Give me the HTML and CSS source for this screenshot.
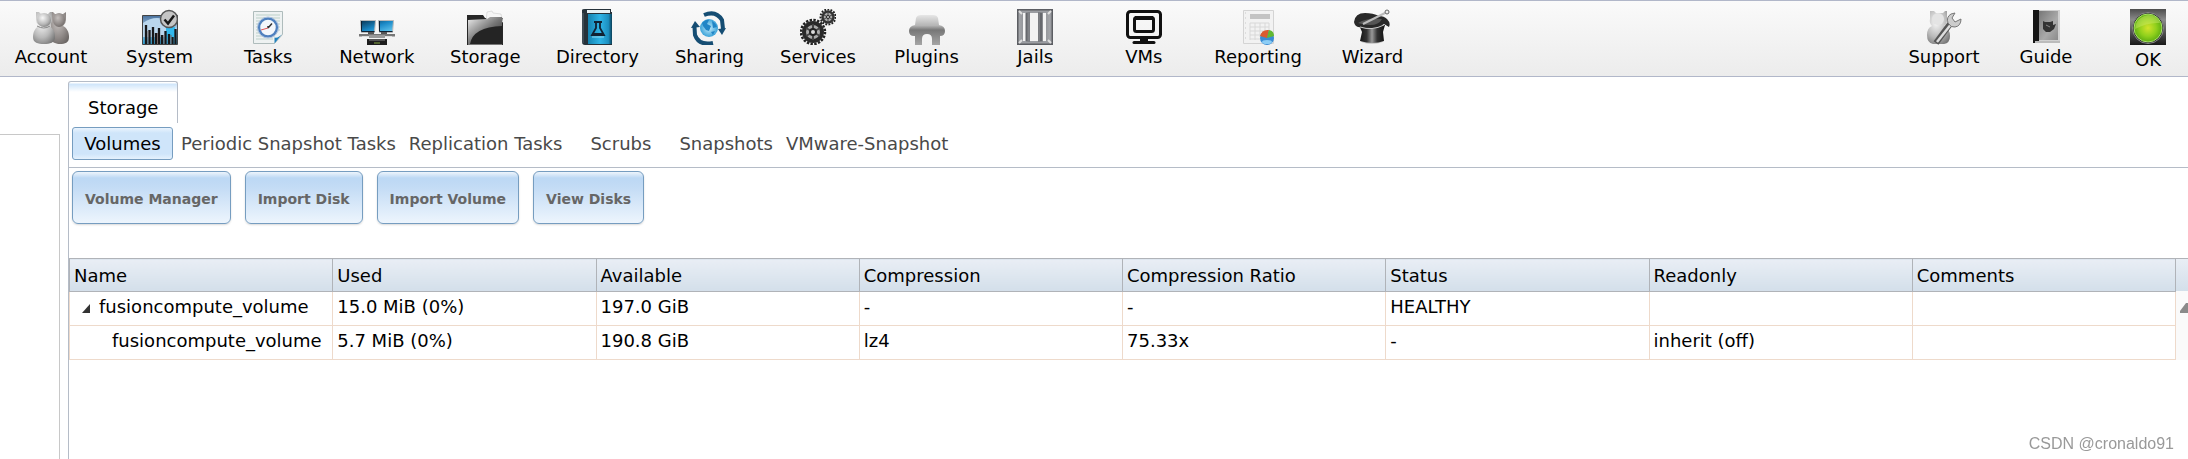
FILE: index.html
```html
<!DOCTYPE html>
<html lang="en">
<head>
<meta charset="utf-8">
<title>Storage</title>
<link rel="stylesheet" href="styles.css">
</head>
<body>
<svg class="defs" width="0" height="0" aria-hidden="true">
  <defs>
    <radialGradient id="silver" cx=".4" cy=".35" r=".75"><stop offset="0" stop-color="#f8f8f8"/><stop offset=".6" stop-color="#b9b9b9"/><stop offset="1" stop-color="#777"/></radialGradient>
    <radialGradient id="pewter" cx=".4" cy=".35" r=".75"><stop offset="0" stop-color="#c4bfbd"/><stop offset=".6" stop-color="#918b89"/><stop offset="1" stop-color="#6a6563"/></radialGradient>
    <linearGradient id="sky" x2="0" y2="1"><stop offset="0" stop-color="#476f9c"/><stop offset=".45" stop-color="#a8cbe8"/><stop offset="1" stop-color="#2c9ed0"/></linearGradient>
    <linearGradient id="screen" x2="1" y2="1"><stop offset="0" stop-color="#0a3350"/><stop offset=".5" stop-color="#1b8ac8"/><stop offset="1" stop-color="#6fd0f5"/></linearGradient>
    <linearGradient id="folder" x2="1" y2="1"><stop offset="0" stop-color="#eee"/><stop offset=".5" stop-color="#777"/><stop offset="1" stop-color="#222"/></linearGradient>
    <linearGradient id="book"><stop offset="0" stop-color="#1583b0"/><stop offset=".5" stop-color="#2fb4e6"/><stop offset=".85" stop-color="#1c8fc0"/><stop offset="1" stop-color="#0b3f57"/></linearGradient>
    <radialGradient id="globe"><stop offset="0" stop-color="#c5ecfb"/><stop offset="1" stop-color="#3aa2d8"/></radialGradient>
    <linearGradient id="puzzle" x2="0" y2="1"><stop offset="0" stop-color="#e6e6e6"/><stop offset=".35" stop-color="#b5b5b5"/><stop offset=".5" stop-color="#777"/><stop offset="1" stop-color="#a5a5a5"/></linearGradient>
    <linearGradient id="bar"><stop offset="0" stop-color="#a4a6aa"/><stop offset=".5" stop-color="#6c6e73"/><stop offset="1" stop-color="#a4a6aa"/></linearGradient>
    <linearGradient id="hat"><stop offset="0" stop-color="#111"/><stop offset=".3" stop-color="#333"/><stop offset=".5" stop-color="#999"/><stop offset=".7" stop-color="#333"/><stop offset="1" stop-color="#111"/></linearGradient>
    <linearGradient id="cover" x2="1" y2="1"><stop offset="0" stop-color="#777"/><stop offset=".6" stop-color="#aaa"/><stop offset="1" stop-color="#8a8a8a"/></linearGradient>
    <radialGradient id="lamp"><stop offset="0" stop-color="#d2e32c"/><stop offset=".6" stop-color="#8fd01c"/><stop offset="1" stop-color="#5fae12"/></radialGradient>
    <linearGradient id="plate" x2="0" y2="1"><stop offset="0" stop-color="#4d4d4d"/><stop offset=".3" stop-color="#8b8b8b"/><stop offset="1" stop-color="#181818"/></linearGradient>
  </defs>
</svg>

<header class="toolbar">
  <nav class="menu" aria-label="Main">
    <button class="item"><svg class="icon" viewBox="0 0 36 36">
      <path d="M17 3h3l2 2h8l3-2v8a8 8 0 0 1-3 6c4 2 6 6 6 11 0 6-4 7-9 7s-9-2-9-7z" fill="url(#pewter)"/>
      <path d="M3 3h3l2 2h7l2-2h2v9a8 8 0 0 1-3 5c4 2 6 6 6 11 0 6-5 7-11 7S0 34 0 28c0-5 2-9 6-11a8 8 0 0 1-3-6z" fill="url(#silver)"/>
      <ellipse cx="11" cy="11" rx="7" ry="7" fill="url(#silver)"/><path d="M4 17q7 4 13 0" stroke="#888" fill="none"/><ellipse cx="26" cy="11" rx="6" ry="7" fill="url(#pewter)"/>
    </svg>Account</button>
    <button class="item"><svg class="icon" viewBox="0 0 36 36">
      <path d="M.5 6.500h35v29H.5z" fill="url(#sky)" stroke="#444"/>
      <path d="M1 14q10-7 20-4l9 8v10H1z" fill="#b9d6ed"/><path d="M24 18h9v12h-9z" fill="#32b9ed"/>
      <path d="M4 35V16M7.500 35V21M11 35V18M14 35V24M17 35V19M20 35V26M23.500 35V22M27 35V25M30.500 35V28M33.500 35V20" stroke="#17181a" stroke-width="2.300"/><path d="M6 35V22M15.500 35V24M22 35V26M29 35V26" stroke="#766"/>
      <circle cx="27" cy="10" r="8.500" fill="#c5c5c5" stroke="#555" stroke-width="1.500"/><path d="M22.500 10.500l3.500 4 6-8" fill="none" stroke="#181818" stroke-width="2.500"/>
    </svg>System</button>
    <button class="item"><svg class="icon" viewBox="0 0 36 36">
      <path d="M3.500 2.500h29v23l-8 9h-21z" fill="#eef2f2" stroke="#afbcbc"/>
      <path d="M6 6h24M6 9h24M6 12h24M6 15h24M6 18h24M6 21h24M6 24h21M6 27h19M6 30h17" stroke="#bcd0c9"/>
      <path d="M24.500 34.500v-6q4 1 8-4z" fill="#2181bc"/>
      <circle cx="18" cy="18.500" r="9" fill="#f3f7fb" stroke="#4e80be" stroke-width="2.500"/><circle cx="18" cy="18.500" r="10.500" fill="none" stroke="#a8bfdd"/>
      <path d="M18 19l4-4.500M18 19v-2" stroke="#333" stroke-width="1.500"/><path d="M11 21l7-2" stroke="#d55"/>
    </svg>Tasks</button>
    <button class="item"><svg class="icon" viewBox="0 0 36 36">
      <path d="M1.500 11.500h15l-1 12h-13zM19.500 11.500h15l-1 12h-13z" fill="url(#screen)" stroke="#bbb"/>
      <path d="M2.500 12v10.500h13M20.500 12v10.500h13" fill="none" stroke="#123" />
      <path d="M9 23h6v2H9zM22 23h6v2h-6z" fill="#555"/><path d="M0 25h36v2.500H0z" fill="#777"/><path d="M3 27.500h9M24 27.500h9" stroke="#ddd"/>
      <path d="M10 26h16v3H10z" fill="#999"/><path d="M8 30h20v6H8z" fill="#1d1d1d"/><path d="M10 31h16" stroke="#888"/><path d="M15 34h6" stroke="#8a4"/>
    </svg>Network</button>
    <button class="item"><svg class="icon" viewBox="0 0 36 36">
      <path d="M0 6h16l2 3h18v27H0z" fill="#272727"/><path d="M20 3l5-1 1 2 8 1 2 8H19z" fill="#f5f5f5" stroke="#ccc" stroke-width=".6"/>
      <path d="M1 11l19-1 3-2h12v27H1z" fill="url(#folder)"/><path d="M3 35Q6 18 35 17v18z" fill="#242424"/><path d="M1 35.500h34" stroke="#777"/>
    </svg>Storage</button>
    <button class="item"><svg class="icon" viewBox="0 0 36 36">
      <path d="M3 1q0-1 3-1h26v3h1v33H6q-3 0-3-3z" fill="#26323a"/><path d="M8 1h23v3H8z" fill="#e7f1f4"/><path d="M9 5h24v30H9z" fill="url(#book)"/><path d="M4 4v30" stroke="#56656e"/>
      <path d="M15 13h8M17 13v6l-4 7h12l-4-7v-6" fill="none" stroke="#123" stroke-width="1.800"/><path d="M14 24h10v2H14z" fill="#123"/><path d="M13 28h12" stroke="#8cdaf5"/>
    </svg>Directory</button>
    <button class="item"><svg class="icon" viewBox="0 0 36 36">
      <circle cx="18" cy="19" r="9" fill="url(#globe)"/><path d="M11 14q4-4 7-3l-2 4 4 2-2 5-3-1-3-4zM21 12q4 2 5 6l-4 1zM20 23l4-1-2 4z" fill="#2185c6"/>
      <path d="M13 6Q25 1 31 11l1 9" fill="none" stroke="#154d73" stroke-width="4"/><path d="M27 20l8-1-4 7z" fill="#154d73"/>
      <path d="M22 34Q8 37 4 26l-.5-8" fill="none" stroke="#154d73" stroke-width="4"/><path d="M0 19l9-1-5-6z" fill="#154d73"/>
    </svg>Sharing</button>
    <button class="item"><svg class="icon" viewBox="0 0 36 36">
      <circle cx="13" cy="23" r="12" fill="none" stroke="#222" stroke-width="2.500" stroke-dasharray="2.400 1.370"/><circle cx="13" cy="23" r="9" fill="#aaa" stroke="#292929" stroke-width="4"/>
      <path d="M13 15v16M6 19l14 8M6 27l14-8" stroke="#444" stroke-width="2"/><circle cx="13" cy="23" r="3" fill="#ddd" stroke="#222" stroke-width="2"/>
      <circle cx="28" cy="8" r="7.500" fill="none" stroke="#222" stroke-width="2" stroke-dasharray="1.800 1.340"/><circle cx="28" cy="8" r="5.500" fill="#aaa" stroke="#333" stroke-width="2.500"/>
      <path d="M28 3v10M24 6l8 4M24 10l8-4" stroke="#444"/><circle cx="28" cy="8" r="1.500" fill="#ddd" stroke="#222"/>
    </svg>Services</button>
    <button class="item"><svg class="icon" viewBox="0 0 36 36">
      <path d="M7 9q1-3 5-3h12q4 0 5 3l1 7q6 1 6 6t-5 5v9h-8v-6q0-5-5-5t-5 5v6H6v-9H5q-5 0-5-5t6-6z" fill="url(#puzzle)"/>
    </svg>Plugins</button>
    <button class="item"><svg class="icon" viewBox="0 0 36 36">
      <path d="M0 0h36v36H0z" fill="#5c5e63"/><path d="M1.500 1.500h33v33h-33z" fill="#9b9da2"/><path d="M4 4h28v28H4z" fill="#f3f3f3"/>
      <path d="M2 3h4v30H2zM9 3h4v30H9zM21 3h5v30h-5zM29 3h4v30h-4z" fill="url(#bar)"/><path d="M9.500 4v28M24 4v28" stroke="#66686d" stroke-width="2"/>
      <path d="M2 2l3 3M34 2l-3 3M2 34l3-3M34 34l-3-3" stroke="#ddd" stroke-width="2"/>
    </svg>Jails</button>
    <button class="item"><svg class="icon" viewBox="0 0 36 36" fill="none" stroke="#111">
      <rect x="1.500" y="2.500" width="33" height="26" rx="3" stroke-width="3"/><rect x="8.500" y="8.500" width="19" height="14" rx="2" stroke-width="3"/><path d="M9 9h18" stroke-width="4"/>
      <path d="M14 30h8" stroke-width="4"/><path d="M8 33.500h20" stroke-width="3" stroke-linecap="round"/>
    </svg>VMs</button>
    <button class="item"><svg class="icon" viewBox="0 0 36 36">
      <path d="M3.500 1.500h30v33h-30z" fill="#f2f2f2" stroke="#d4d4d4"/><path d="M10 5h20v5H10z" fill="#c3c3c3"/>
      <path d="M10 14h19M10 18h19M10 22h16M10 26h12M10 30h10M10 14v17M15 14v17M20 14v14M25 14v9M29 14v9" stroke="#d8d8d8"/><path d="M5.500 3v30" stroke="#ddd" stroke-dasharray="2 3"/>
      <circle cx="27" cy="29" r="7" fill="#398bd3"/><path d="M27 29l-7-2q2-7 9-6z" fill="#d95b30"/><path d="M27 29l2-8q5 1 5 6z" fill="#62b832"/><ellipse cx="27" cy="33" rx="5" ry="2" fill="#8ccdf5"/>
    </svg>Reporting</button>
    <button class="item"><svg class="icon" viewBox="0 0 36 36">
      <ellipse cx="18" cy="32" rx="11" ry="3" fill="#ccc"/><path d="M5 16h26l-2 7 1 9q-11 4-24 0l2-9z" fill="url(#hat)"/>
      <path d="M0 13Q1 4 11 4q8 0 14 3 5 0 8 3 4 4 2 8l-5-3Q18 23 7 18 1 19 0 13z" fill="#292929"/><path d="M4 14q10-6 24-4-3 6-12 6-7 0-12-2z" fill="#555"/>
      <path d="M6 18q12 4 24-2" stroke="#ccc" fill="none"/><path d="M9 15L31 4" stroke="#bbb" stroke-width="2"/><circle cx="33" cy="3" r="2" fill="#eee" stroke="#666"/>
    </svg>Wizard</button>
  </nav>
  <nav class="menu menu-side" aria-label="Help and status">
    <button class="item"><svg class="icon" viewBox="0 0 36 36">
      <path d="M4 2h4l2 2h7l2-2h2v9q0 4-3 6 6 3 6 10 0 7-6 8H7q-6-1-6-9 0-7 5-9-3-3-2-7z" fill="url(#silver)"/><ellipse cx="12" cy="10" rx="6" ry="6" fill="#e4e4e4"/>
      <path d="M10 34l14-19" stroke="#555" stroke-width="6"/><path d="M11 33l15-19" stroke="#ddd" stroke-width="2.500"/>
      <path d="M22 14q-2-6 3-9l4-1-3 5 3 4 6-3q0 7-6 8-4 1-7-4z" fill="#ccc" stroke="#777"/>
    </svg>Support</button>
    <button class="item"><svg class="icon" viewBox="0 0 36 36">
      <path d="M5 1h27v33H5z" fill="#d0d0d0"/><path d="M5 1h6v33H5z" fill="#151515"/><path d="M11 2h19v29H11z" fill="url(#cover)"/><path d="M7 32h25v2H7z" fill="#bbb"/>
      <path d="M15 12l2 1h5l3-1v4l3-1-2 5-4 3h-4l-3-3z" fill="#333"/><path d="M18 16l4 2" stroke="#888"/>
    </svg>Guide</button>
    <button class="item status"><svg class="icon" viewBox="0 0 36 36">
      <path d="M0 0h36v36H0z" fill="url(#plate)"/><circle cx="18" cy="19" r="15.500" fill="#222" stroke="#888"/><circle cx="18" cy="19" r="14" fill="url(#lamp)" stroke="#a9e26a"/><path d="M5 20Q6 8 18 6q9 0 12 8-12-1-25 6z" fill="#d5ee72" opacity=".4"/>
    </svg>OK</button>
  </nav>
</header>

<div class="layout">
  <aside class="sidebar"></aside>
  <main class="main">
    <div class="page-tabs"><button class="page-tab">Storage</button></div>
    <section class="panel">
      <nav class="subtabs" aria-label="Storage sections">
        <button class="subtab selected">Volumes</button>
        <button class="subtab">Periodic Snapshot Tasks</button>
        <button class="subtab">Replication Tasks</button>
        <button class="subtab">Scrubs</button>
        <button class="subtab">Snapshots</button>
        <button class="subtab">VMware-Snapshot</button>
      </nav>
      <div class="actions">
        <button class="action">Volume Manager</button>
        <button class="action">Import Disk</button>
        <button class="action">Import Volume</button>
        <button class="action">View Disks</button>
      </div>
      <div class="grid-wrap">
        <table class="grid">
          <thead>
            <tr><th>Name</th><th>Used</th><th>Available</th><th>Compression</th><th>Compression Ratio</th><th>Status</th><th>Readonly</th><th>Comments</th></tr>
          </thead>
          <tbody>
            <tr><td class="root"><button class="expander" aria-label="Collapse"><svg viewBox="0 0 9 9" width="9" height="9"><path d="M0 9L8 0v9z" fill="#333"/></svg></button>fusioncompute_volume</td><td>15.0 MiB (0%)</td><td>197.0 GiB</td><td>-</td><td>-</td><td>HEALTHY</td><td></td><td></td></tr>
            <tr><td class="child">fusioncompute_volume</td><td>5.7 MiB (0%)</td><td>190.8 GiB</td><td>lz4</td><td>75.33x</td><td>-</td><td>inherit (off)</td><td></td></tr>
          </tbody>
        </table>
        <div class="scroll">
          <div class="scroll-head"></div>
          <svg class="scroll-up" viewBox="0 0 16 10" width="16" height="10"><path d="M0 10V8l6-8h4l6 8v2z" fill="#8a8a8a"/></svg>
        </div>
      </div>
    </section>
  </main>
</div>
<div class="watermark">CSDN @cronaldo91</div>
</body>
</html>
```
FILE: styles.css
```css
* { box-sizing: border-box; }

body {
  margin: 0;
  min-height: 100vh;
  display: flex;
  flex-direction: column;
  overflow: hidden;
  background: #fff;
  color: #000;
  font: 18px/24px "DejaVu Sans", Verdana, sans-serif;
}

button {
  margin: 0;
  padding: 0;
  border: 0;
  background: none;
  color: inherit;
  font: inherit;
  white-space: nowrap;
  cursor: pointer;
}

.defs { position: absolute; }

.toolbar {
  display: flex;
  justify-content: space-between;
  align-items: flex-start;
  height: 77px;
  padding: 8px 0 0 1px;
  border-top: 1px solid #b1b7c9;
  border-bottom: 1px solid #b1b7c9;
  background: linear-gradient(#fafafa, #ececec);
}

.menu {
  display: flex;
  flex: 0 0 65%;
  justify-content: space-between;
}

.menu-side {
  flex: none;
  gap: 22px;
}

.item {
  display: flex;
  flex-direction: column;
  align-items: center;
  min-width: 100px;
  padding: 0 12px;
}

.menu-side .item {
  min-width: 80px;
  padding: 0;
}

.icon {
  display: block;
  width: 36px;
  height: 36px;
}

.status { gap: 3px; }

.layout {
  display: flex;
  flex: 1;
  align-items: stretch;
}

.sidebar {
  flex: 0 0 60px;
  margin: 57px 8px 0 0;
  border-top: 1px solid #c8c8c8;
  border-right: 1px solid #c8c8c8;
}

.main {
  display: flex;
  flex: 1;
  flex-direction: column;
  min-width: 0;
  padding-top: 4px;
}

.page-tabs { display: flex; }

.page-tab {
  height: 42px;
  padding: 10px 19px 0;
  border: 1px solid #b5bcc7;
  border-bottom: 0;
  border-radius: 3px 3px 0 0;
  background: linear-gradient(#fff 1px, #cfe5fa 2px, #fff 10px);
}

.panel {
  flex: 1;
  border-left: 1px solid #b5bcc7;
}

.subtabs {
  display: flex;
  gap: 3px;
  padding: 4px 3px 7px;
  border-bottom: 1px solid #b5bcc7;
}

.subtab {
  min-width: 101px;
  height: 33px;
  padding: 0 4px;
  border: 1px solid transparent;
  border-radius: 3px;
  color: #494949;
}

.subtab.selected {
  border-color: #769dc0;
  background: linear-gradient(#eaf4fe, #cfe5fa 5px, #cfe5fa 26px, #e6f2fd);
  color: #000;
}

.actions {
  display: flex;
  gap: 14px;
  padding: 3px 3px 34px;
}

.action {
  height: 53px;
  padding: 3px 12px 0;
  border: 1px solid #769dc0;
  border-radius: 6px;
  background: linear-gradient(#eef5fc, #bcd8f4 6px, #c4dcf5 16px, #edf5fd);
  box-shadow: 0 1px 2px rgba(0, 0, 0, .15);
  color: #666;
  font-size: 14px;
  font-weight: bold;
}

.grid-wrap {
  display: grid;
  grid-template-columns: 1fr 12px;
}

.grid {
  width: 100%;
  table-layout: fixed;
  border-collapse: collapse;
}

.grid th {
  height: 33px;
  padding: 2px 4px 0;
  border: 1px solid #b0b3b8;
  background: linear-gradient(#e9eef5, #d3dfea);
  font-weight: normal;
  text-align: left;
}

.grid td {
  height: 34px;
  padding: 0 4px 4px;
  border: 1px solid #eedacb;
}

.grid .root { padding-left: 12px; }
.grid .child { padding-left: 42px; }

.expander {
  margin-right: 8px;
  line-height: 9px;
}

.scroll {
  overflow: hidden;
  background: #fafafa;
}

.scroll-head {
  height: 33px;
  border-top: 1px solid #b0b3b8;
  background: linear-gradient(#e9eef5, #d3dfea);
}

.scroll-up {
  display: block;
  margin: 12px 0 0 4px;
}

.watermark {
  position: fixed;
  right: 14px;
  bottom: 3px;
  color: #999;
  font: 16px/24px "Liberation Sans", Arial, sans-serif;
}
```
